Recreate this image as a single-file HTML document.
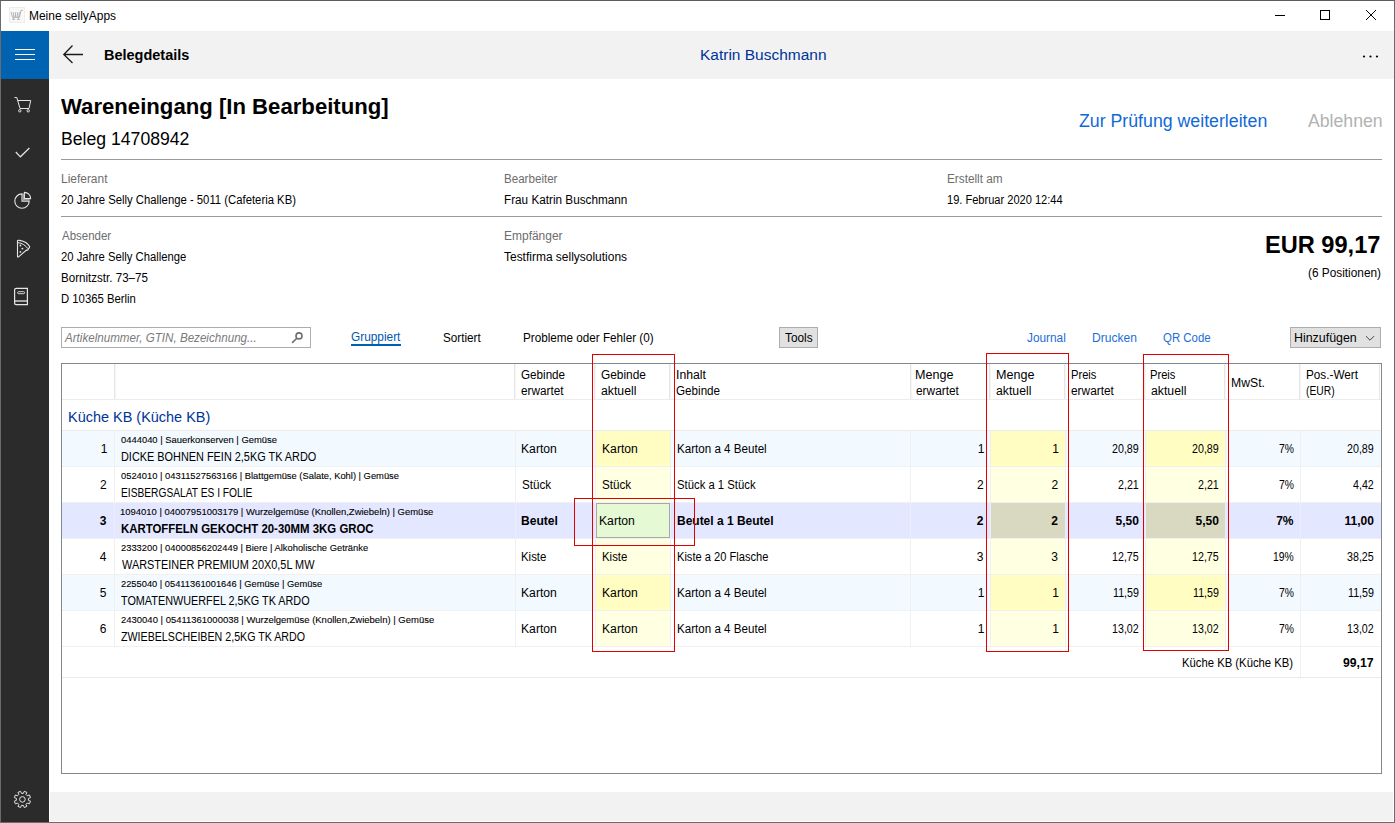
<!DOCTYPE html>
<html lang="de"><head><meta charset="utf-8"><title>Meine sellyApps</title>
<style>
html,body{margin:0;padding:0;}
body{width:1395px;height:823px;position:relative;overflow:hidden;background:#fff;font-family:'Liberation Sans',sans-serif;}
.t{position:absolute;white-space:pre;line-height:1;color:#000;transform-origin:0 0;}
.b{position:absolute;}
svg{position:absolute;overflow:visible;}
</style></head><body>
<!-- window frame -->
<div class="b" style="left:0;top:0;width:1395px;height:823px;background:#6b6b6b"></div><div class="b" style="left:0;top:0;width:1395px;height:1px;background:#5c5c5c"></div>
<div class="b" style="left:1px;top:1px;width:1393px;height:821px;background:#fff"></div>
<!-- nav bar -->
<div class="b" style="left:49px;top:31px;width:1345px;height:48px;background:#f2f2f2"></div>
<!-- sidebar -->
<div class="b" style="left:1px;top:31px;width:48px;height:791px;background:#2b2b2b"></div>
<div class="b" style="left:1px;top:31px;width:48px;height:48px;background:#0063b1"></div>
<!-- bottom bar -->
<div class="b" style="left:50px;top:792px;width:1343px;height:29px;background:#f2f2f2"></div>
<!-- title icon -->
<div class="b" style="left:9px;top:7px;width:16px;height:16px;background:#f8f8f8;box-shadow:inset 0 0 0 1px #ededed"></div>
<svg style="left:9px;top:7px" width="16" height="16" viewBox="0 0 16 16" fill="none" stroke="#a2a2a2" stroke-width="0.8"><path d="M2 5 L3.6 10.3 H10.3 L12 3.4 H13.8 M4.2 5.2 L5 10 M6.3 5.2 L6.6 10 M8.4 5.2 L8.2 10 M10.4 5.2 L9.8 10" /><path d="M3.4 12.3H5.8M8.2 12.3H10.6" stroke-width="1.1"/><path d="M4.6 10.5V12M9.4 10.5V12" stroke-width="0.7"/></svg>
<!-- window controls -->
<svg style="left:0;top:0" width="1395" height="80" viewBox="0 0 1395 80" fill="none" stroke="#000" stroke-width="1">
<path d="M1275 15.5H1285"/><rect x="1320.5" y="10.5" width="9" height="9"/><path d="M1366 10L1376 20M1376 10L1366 20"/>
<g fill="#000" stroke="none"><circle cx="1364" cy="56.5" r="1.1"/><circle cx="1370.5" cy="56.5" r="1.1"/><circle cx="1377" cy="56.5" r="1.1"/></g>
<!-- hamburger -->
<path d="M15 49.5H35M15 54.5H35M15 59.5H35" stroke="#fff"/>
<!-- back arrow -->
<path d="M83 54.5H64M72.5 45.5L63.8 54.5L72.5 63" stroke="#1a1a1a" stroke-width="1.3"/>
</svg>
<!-- sidebar icons -->
<svg style="left:0;top:80px" width="50" height="743" viewBox="0 80 50 743" fill="none" stroke="#e6e6e6" stroke-width="1">
<!-- cart -->
<path d="M14.5 97.5H16.8L20 108.5H29L30.7 100.5H17.8"/><circle cx="19.8" cy="110.8" r="1.2"/><circle cx="28.2" cy="110.8" r="1.2"/>
<!-- check -->
<path d="M15.8 152L20.4 156.8L29.4 148" stroke-width="1.2"/>
<!-- pie -->
<path d="M22 193.9A7.2 7.2 0 1 0 29.2 201.1H22Z" stroke-width="1.1"/><path d="M23.2 193.6V199.9H29.6" stroke="#a8a8a8" stroke-width="1.4"/><path d="M24.4 192.4V198.6H30.6A6.2 6.2 0 0 0 24.4 192.4Z" stroke-width="1.1"/>
<!-- pizza -->
<path d="M17.5 241.6C17.1 240.5 18 240.1 19.6 240.4C24.2 241.2 28 243.6 29.6 246.6C29.9 247.5 28.8 248 28.1 249.4C27.6 250.5 26.8 250.6 26.4 250L18.6 256.9C18 257.3 17.5 257 17.5 256.4Z" stroke-width="1.1"/><path d="M17.8 242.6C22.2 243.1 26 245.6 27.7 248.6" stroke-width="1"/><g fill="#e6e6e6" stroke="none"><circle cx="20.4" cy="245.5" r="0.9"/><circle cx="22.4" cy="248.6" r="0.95"/><circle cx="20.4" cy="251.9" r="0.9"/></g>
<!-- book -->
<path d="M27.4 288.4H16.2Q14.6 288.4 14.6 290V303Q14.6 304.6 16.2 304.6H27.4Z" stroke-width="1.2"/><path d="M14.8 301H27.4" stroke-width="1.3"/><rect x="17.6" y="291.7" width="7" height="2" rx="1" stroke-width="0.9"/>
<!-- gear -->
<circle cx="22.4" cy="799.4" r="2.8"/>
<path d="M30.50 801.21L29.41 803.85L27.34 802.99L25.99 804.34L26.85 806.41L24.21 807.50L23.35 805.42L21.45 805.42L20.59 807.50L17.95 806.41L18.81 804.34L17.46 802.99L15.39 803.85L14.30 801.21L16.38 800.35L16.38 798.45L14.30 797.59L15.39 794.95L17.46 795.81L18.81 794.46L17.95 792.39L20.59 791.30L21.45 793.38L23.35 793.38L24.21 791.30L26.85 792.39L25.99 794.46L27.34 795.81L29.41 794.95L30.50 797.59L28.42 798.45L28.42 800.35Z"/>
</svg>
<!-- rules -->
<div class="b" style="left:61px;top:159px;width:1321px;height:1px;background:#9a9a9a"></div>
<div class="b" style="left:61px;top:216px;width:1321px;height:1px;background:#9a9a9a"></div>
<!-- search box -->
<div class="b" style="left:61px;top:327px;width:250px;height:21px;box-sizing:border-box;border:1px solid #abadb3;background:#fff"></div>
<svg style="left:290px;top:331px" width="16" height="14" viewBox="290 331 16 14" fill="none" stroke="#6e6e6e" stroke-width="1.6"><circle cx="299" cy="335.9" r="3"/><path d="M296.8 338.2L292.1 342.9"/></svg>
<div class="b" style="left:351px;top:344px;width:50px;height:2px;background:#0063b1"></div>
<!-- buttons -->
<div class="b" style="left:779px;top:327px;width:39px;height:21px;box-sizing:border-box;border:1px solid #adadad;background:#e1e1e1"></div>
<div class="b" style="left:1290px;top:327px;width:91px;height:21px;box-sizing:border-box;border:1px solid #adadad;background:#e1e1e1"></div>
<svg style="left:1365px;top:335px" width="10" height="7" viewBox="0 0 10 7" fill="none" stroke="#444" stroke-width="1"><path d="M0.9 1.1L5 5.2L9.1 1.1"/></svg>
<div class="b" style="left:61px;top:363px;width:1321px;height:411px;background:#fff;box-sizing:border-box;border:1px solid #828790"></div>
<div class="b" style="left:62px;top:399px;width:1319px;height:1px;background:#ececec;"></div>
<div class="b" style="left:114px;top:364px;width:1px;height:35px;background:#e6e6e6;"></div>
<div class="b" style="left:115px;top:364px;width:1px;height:35px;background:#f5f5f5;"></div>
<div class="b" style="left:514px;top:364px;width:1px;height:35px;background:#e6e6e6;"></div>
<div class="b" style="left:515px;top:364px;width:1px;height:35px;background:#f5f5f5;"></div>
<div class="b" style="left:594px;top:364px;width:1px;height:35px;background:#e6e6e6;"></div>
<div class="b" style="left:595px;top:364px;width:1px;height:35px;background:#f5f5f5;"></div>
<div class="b" style="left:669px;top:364px;width:1px;height:35px;background:#e6e6e6;"></div>
<div class="b" style="left:670px;top:364px;width:1px;height:35px;background:#f5f5f5;"></div>
<div class="b" style="left:910px;top:364px;width:1px;height:35px;background:#e6e6e6;"></div>
<div class="b" style="left:911px;top:364px;width:1px;height:35px;background:#f5f5f5;"></div>
<div class="b" style="left:989px;top:364px;width:1px;height:35px;background:#e6e6e6;"></div>
<div class="b" style="left:990px;top:364px;width:1px;height:35px;background:#f5f5f5;"></div>
<div class="b" style="left:1064px;top:364px;width:1px;height:35px;background:#e6e6e6;"></div>
<div class="b" style="left:1065px;top:364px;width:1px;height:35px;background:#f5f5f5;"></div>
<div class="b" style="left:1144px;top:364px;width:1px;height:35px;background:#e6e6e6;"></div>
<div class="b" style="left:1145px;top:364px;width:1px;height:35px;background:#f5f5f5;"></div>
<div class="b" style="left:1224px;top:364px;width:1px;height:35px;background:#e6e6e6;"></div>
<div class="b" style="left:1225px;top:364px;width:1px;height:35px;background:#f5f5f5;"></div>
<div class="b" style="left:1299px;top:364px;width:1px;height:35px;background:#e6e6e6;"></div>
<div class="b" style="left:1300px;top:364px;width:1px;height:35px;background:#f5f5f5;"></div>
<div class="b" style="left:1379px;top:364px;width:1px;height:35px;background:#e6e6e6;"></div>
<div class="b" style="left:62px;top:430px;width:1319px;height:1px;background:#ebebeb;"></div>
<div class="b" style="left:62px;top:431px;width:1319px;height:35px;background:#f2f9ff;"></div>
<div class="b" style="left:62px;top:466px;width:1319px;height:1px;background:#f0f0f0;"></div>
<div class="b" style="left:114px;top:431px;width:1px;height:36px;background:#f0f0f0;"></div>
<div class="b" style="left:515px;top:431px;width:1px;height:36px;background:#f0f0f0;"></div>
<div class="b" style="left:595px;top:431px;width:1px;height:36px;background:#f0f0f0;"></div>
<div class="b" style="left:670px;top:431px;width:1px;height:36px;background:#f0f0f0;"></div>
<div class="b" style="left:910px;top:431px;width:1px;height:36px;background:#f0f0f0;"></div>
<div class="b" style="left:990px;top:431px;width:1px;height:36px;background:#f0f0f0;"></div>
<div class="b" style="left:1065px;top:431px;width:1px;height:36px;background:#f0f0f0;"></div>
<div class="b" style="left:1145px;top:431px;width:1px;height:36px;background:#f0f0f0;"></div>
<div class="b" style="left:1225px;top:431px;width:1px;height:36px;background:#f0f0f0;"></div>
<div class="b" style="left:1300px;top:431px;width:1px;height:36px;background:#f0f0f0;"></div>
<div class="b" style="left:596px;top:431px;width:74px;height:35px;background:#fffdc2;"></div>
<div class="b" style="left:991px;top:431px;width:74px;height:35px;background:#fffdc2;"></div>
<div class="b" style="left:1146px;top:431px;width:79px;height:35px;background:#fffdc2;"></div>
<div class="b" style="left:62px;top:467px;width:1319px;height:35px;background:#fff;"></div>
<div class="b" style="left:62px;top:502px;width:1319px;height:1px;background:#f0f0f0;"></div>
<div class="b" style="left:114px;top:467px;width:1px;height:36px;background:#f0f0f0;"></div>
<div class="b" style="left:515px;top:467px;width:1px;height:36px;background:#f0f0f0;"></div>
<div class="b" style="left:595px;top:467px;width:1px;height:36px;background:#f0f0f0;"></div>
<div class="b" style="left:670px;top:467px;width:1px;height:36px;background:#f0f0f0;"></div>
<div class="b" style="left:910px;top:467px;width:1px;height:36px;background:#f0f0f0;"></div>
<div class="b" style="left:990px;top:467px;width:1px;height:36px;background:#f0f0f0;"></div>
<div class="b" style="left:1065px;top:467px;width:1px;height:36px;background:#f0f0f0;"></div>
<div class="b" style="left:1145px;top:467px;width:1px;height:36px;background:#f0f0f0;"></div>
<div class="b" style="left:1225px;top:467px;width:1px;height:36px;background:#f0f0f0;"></div>
<div class="b" style="left:1300px;top:467px;width:1px;height:36px;background:#f0f0f0;"></div>
<div class="b" style="left:596px;top:467px;width:74px;height:35px;background:#ffffe2;"></div>
<div class="b" style="left:991px;top:467px;width:74px;height:35px;background:#ffffe2;"></div>
<div class="b" style="left:1146px;top:467px;width:79px;height:35px;background:#ffffe2;"></div>
<div class="b" style="left:62px;top:503px;width:1319px;height:35px;background:#e3e7ff;"></div>
<div class="b" style="left:62px;top:538px;width:1319px;height:1px;background:#f0f0f0;"></div>
<div class="b" style="left:114px;top:503px;width:1px;height:36px;background:#eceefa;"></div>
<div class="b" style="left:515px;top:503px;width:1px;height:36px;background:#eceefa;"></div>
<div class="b" style="left:595px;top:503px;width:1px;height:36px;background:#eceefa;"></div>
<div class="b" style="left:670px;top:503px;width:1px;height:36px;background:#eceefa;"></div>
<div class="b" style="left:910px;top:503px;width:1px;height:36px;background:#eceefa;"></div>
<div class="b" style="left:990px;top:503px;width:1px;height:36px;background:#eceefa;"></div>
<div class="b" style="left:1065px;top:503px;width:1px;height:36px;background:#eceefa;"></div>
<div class="b" style="left:1145px;top:503px;width:1px;height:36px;background:#eceefa;"></div>
<div class="b" style="left:1225px;top:503px;width:1px;height:36px;background:#eceefa;"></div>
<div class="b" style="left:1300px;top:503px;width:1px;height:36px;background:#eceefa;"></div>
<div class="b" style="left:596px;top:503px;width:74px;height:35px;background:#ffffe2;"></div>
<div class="b" style="left:991px;top:503px;width:74px;height:35px;background:#d9d9c1;"></div>
<div class="b" style="left:1146px;top:503px;width:79px;height:35px;background:#d9d9c1;"></div>
<div class="b" style="left:62px;top:539px;width:1319px;height:35px;background:#fff;"></div>
<div class="b" style="left:62px;top:574px;width:1319px;height:1px;background:#f0f0f0;"></div>
<div class="b" style="left:114px;top:539px;width:1px;height:36px;background:#f0f0f0;"></div>
<div class="b" style="left:515px;top:539px;width:1px;height:36px;background:#f0f0f0;"></div>
<div class="b" style="left:595px;top:539px;width:1px;height:36px;background:#f0f0f0;"></div>
<div class="b" style="left:670px;top:539px;width:1px;height:36px;background:#f0f0f0;"></div>
<div class="b" style="left:910px;top:539px;width:1px;height:36px;background:#f0f0f0;"></div>
<div class="b" style="left:990px;top:539px;width:1px;height:36px;background:#f0f0f0;"></div>
<div class="b" style="left:1065px;top:539px;width:1px;height:36px;background:#f0f0f0;"></div>
<div class="b" style="left:1145px;top:539px;width:1px;height:36px;background:#f0f0f0;"></div>
<div class="b" style="left:1225px;top:539px;width:1px;height:36px;background:#f0f0f0;"></div>
<div class="b" style="left:1300px;top:539px;width:1px;height:36px;background:#f0f0f0;"></div>
<div class="b" style="left:596px;top:539px;width:74px;height:35px;background:#ffffe2;"></div>
<div class="b" style="left:991px;top:539px;width:74px;height:35px;background:#ffffe2;"></div>
<div class="b" style="left:1146px;top:539px;width:79px;height:35px;background:#ffffe2;"></div>
<div class="b" style="left:62px;top:575px;width:1319px;height:35px;background:#f2f9ff;"></div>
<div class="b" style="left:62px;top:610px;width:1319px;height:1px;background:#f0f0f0;"></div>
<div class="b" style="left:114px;top:575px;width:1px;height:36px;background:#f0f0f0;"></div>
<div class="b" style="left:515px;top:575px;width:1px;height:36px;background:#f0f0f0;"></div>
<div class="b" style="left:595px;top:575px;width:1px;height:36px;background:#f0f0f0;"></div>
<div class="b" style="left:670px;top:575px;width:1px;height:36px;background:#f0f0f0;"></div>
<div class="b" style="left:910px;top:575px;width:1px;height:36px;background:#f0f0f0;"></div>
<div class="b" style="left:990px;top:575px;width:1px;height:36px;background:#f0f0f0;"></div>
<div class="b" style="left:1065px;top:575px;width:1px;height:36px;background:#f0f0f0;"></div>
<div class="b" style="left:1145px;top:575px;width:1px;height:36px;background:#f0f0f0;"></div>
<div class="b" style="left:1225px;top:575px;width:1px;height:36px;background:#f0f0f0;"></div>
<div class="b" style="left:1300px;top:575px;width:1px;height:36px;background:#f0f0f0;"></div>
<div class="b" style="left:596px;top:575px;width:74px;height:35px;background:#fffdc2;"></div>
<div class="b" style="left:991px;top:575px;width:74px;height:35px;background:#fffdc2;"></div>
<div class="b" style="left:1146px;top:575px;width:79px;height:35px;background:#fffdc2;"></div>
<div class="b" style="left:62px;top:611px;width:1319px;height:35px;background:#fff;"></div>
<div class="b" style="left:62px;top:646px;width:1319px;height:1px;background:#f0f0f0;"></div>
<div class="b" style="left:114px;top:611px;width:1px;height:36px;background:#f0f0f0;"></div>
<div class="b" style="left:515px;top:611px;width:1px;height:36px;background:#f0f0f0;"></div>
<div class="b" style="left:595px;top:611px;width:1px;height:36px;background:#f0f0f0;"></div>
<div class="b" style="left:670px;top:611px;width:1px;height:36px;background:#f0f0f0;"></div>
<div class="b" style="left:910px;top:611px;width:1px;height:36px;background:#f0f0f0;"></div>
<div class="b" style="left:990px;top:611px;width:1px;height:36px;background:#f0f0f0;"></div>
<div class="b" style="left:1065px;top:611px;width:1px;height:36px;background:#f0f0f0;"></div>
<div class="b" style="left:1145px;top:611px;width:1px;height:36px;background:#f0f0f0;"></div>
<div class="b" style="left:1225px;top:611px;width:1px;height:36px;background:#f0f0f0;"></div>
<div class="b" style="left:1300px;top:611px;width:1px;height:36px;background:#f0f0f0;"></div>
<div class="b" style="left:596px;top:611px;width:74px;height:35px;background:#ffffe2;"></div>
<div class="b" style="left:991px;top:611px;width:74px;height:35px;background:#ffffe2;"></div>
<div class="b" style="left:1146px;top:611px;width:79px;height:35px;background:#ffffe2;"></div>
<div class="b" style="left:596px;top:503px;width:74px;height:35px;background:#e5f9d5;box-sizing:border-box;border:1px solid #a8a8a8"></div>
<div class="b" style="left:62px;top:677px;width:1319px;height:1px;background:#e9e9e9;"></div>
<div class="b" style="left:1300px;top:647px;width:1px;height:30px;background:#f0f0f0;"></div>
<span class="t" style="left:29.40px;top:10px;font-size:12px;transform:scaleX(0.9965);">Meine sellyApps</span>
<span class="t" style="left:104.07px;top:47px;font-size:15.5px;transform:scaleX(0.9348);font-weight:700;">Belegdetails</span>
<span class="t" style="left:699.75px;top:47px;font-size:15.5px;transform:scaleX(0.9992);color:#003399;">Katrin Buschmann</span>
<span class="t" style="left:61.40px;top:97px;font-size:21.5px;transform:scaleX(1.0300);font-weight:700;">Wareneingang [In Bearbeitung]</span>
<span class="t" style="left:60.83px;top:130px;font-size:18px;transform:scaleX(0.9794);">Beleg 14708942</span>
<span class="t" style="left:1079.21px;top:112px;font-size:18px;transform:scaleX(0.9852);color:#0f69d9;">Zur Prüfung weiterleiten</span>
<span class="t" style="left:1307.60px;top:112px;font-size:18px;transform:scaleX(0.9813);color:#b2b2b2;">Ablehnen</span>
<span class="t" style="left:60.61px;top:173px;font-size:12px;transform:scaleX(0.9945);color:#6d6d6d;">Lieferant</span>
<span class="t" style="left:61.03px;top:194px;font-size:12px;transform:scaleX(0.9427);">20 Jahre Selly Challenge - 5011 (Cafeteria KB)</span>
<span class="t" style="left:503.53px;top:173px;font-size:12px;transform:scaleX(0.9659);color:#6d6d6d;">Bearbeiter</span>
<span class="t" style="left:503.52px;top:194px;font-size:12px;transform:scaleX(0.9787);">Frau Katrin Buschmann</span>
<span class="t" style="left:947.32px;top:173px;font-size:12px;transform:scaleX(0.9818);color:#6d6d6d;">Erstellt am</span>
<span class="t" style="left:947.38px;top:194px;font-size:12px;transform:scaleX(0.9218);">19. Februar 2020 12:44</span>
<span class="t" style="left:61.50px;top:230px;font-size:12px;transform:scaleX(0.9561);color:#6d6d6d;">Absender</span>
<span class="t" style="left:61.03px;top:251px;font-size:12px;transform:scaleX(0.9389);">20 Jahre Selly Challenge</span>
<span class="t" style="left:60.54px;top:272px;font-size:12px;transform:scaleX(0.9650);">Bornitzstr. 73–75</span>
<span class="t" style="left:60.56px;top:293px;font-size:12px;transform:scaleX(0.9432);">D 10365 Berlin</span>
<span class="t" style="left:503.50px;top:230px;font-size:12px;transform:scaleX(0.9983);color:#6d6d6d;">Empfänger</span>
<span class="t" style="left:504.25px;top:251px;font-size:12px;transform:scaleX(0.9971);">Testfirma sellysolutions</span>
<span class="t" style="left:1265.49px;top:234px;font-size:23.5px;transform:scaleX(1.0036);font-weight:700;">EUR 99,17</span>
<span class="t" style="left:1308.16px;top:267px;font-size:12px;transform:scaleX(0.9862);">(6 Positionen)</span>
<span class="t" style="left:64.68px;top:332px;font-size:12px;transform:scaleX(0.9680);color:#7a7a7a;font-style:italic;">Artikelnummer, GTIN, Bezeichnung...</span>
<span class="t" style="left:351.21px;top:331px;font-size:12px;transform:scaleX(0.9879);color:#0058ad;">Gruppiert</span>
<span class="t" style="left:442.91px;top:332px;font-size:12px;transform:scaleX(0.9752);">Sortiert</span>
<span class="t" style="left:522.63px;top:332px;font-size:12px;transform:scaleX(0.9747);">Probleme oder Fehler (0)</span>
<span class="t" style="left:784.65px;top:332px;font-size:12px;transform:scaleX(0.9835);">Tools</span>
<span class="t" style="left:1026.95px;top:332px;font-size:12px;transform:scaleX(0.9856);color:#1c6dd8;">Journal</span>
<span class="t" style="left:1091.59px;top:332px;font-size:12px;transform:scaleX(1.0070);color:#1c6dd8;">Drucken</span>
<span class="t" style="left:1162.72px;top:332px;font-size:12px;transform:scaleX(0.9531);color:#1c6dd8;">QR Code</span>
<span class="t" style="left:1294.47px;top:332px;font-size:12px;transform:scaleX(1.0339);">Hinzufügen</span>
<span class="t" style="left:521.31px;top:369px;font-size:12px;transform:scaleX(0.9718);">Gebinde</span>
<span class="t" style="left:521.31px;top:385px;font-size:12px;transform:scaleX(0.9825);">erwartet</span>
<span class="t" style="left:600.91px;top:369px;font-size:12px;transform:scaleX(0.9898);">Gebinde</span>
<span class="t" style="left:600.89px;top:385px;font-size:12px;transform:scaleX(1.0209);">aktuell</span>
<span class="t" style="left:676.08px;top:369px;font-size:12px;transform:scaleX(1.0195);">Inhalt</span>
<span class="t" style="left:676.01px;top:385px;font-size:12px;transform:scaleX(0.9718);">Gebinde</span>
<span class="t" style="left:915.45px;top:369px;font-size:12px;transform:scaleX(1.0468);">Menge</span>
<span class="t" style="left:916.01px;top:385px;font-size:12px;transform:scaleX(0.9895);">erwartet</span>
<span class="t" style="left:995.75px;top:369px;font-size:12px;transform:scaleX(1.0468);">Menge</span>
<span class="t" style="left:996.29px;top:385px;font-size:12px;transform:scaleX(1.0209);">aktuell</span>
<span class="t" style="left:1070.57px;top:369px;font-size:12px;transform:scaleX(0.9300);">Preis</span>
<span class="t" style="left:1071.01px;top:385px;font-size:12px;transform:scaleX(0.9895);">erwartet</span>
<span class="t" style="left:1150.27px;top:369px;font-size:12px;transform:scaleX(0.9300);">Preis</span>
<span class="t" style="left:1150.69px;top:385px;font-size:12px;transform:scaleX(1.0209);">aktuell</span>
<span class="t" style="left:1230.68px;top:377px;font-size:12px;transform:scaleX(1.0176);">MwSt.</span>
<span class="t" style="left:1306.02px;top:369px;font-size:12px;transform:scaleX(0.9788);">Pos.-Wert</span>
<span class="t" style="left:1306.36px;top:385px;font-size:12px;transform:scaleX(0.8567);">(EUR)</span>
<span class="t" style="left:68.13px;top:409px;font-size:15.5px;transform:scaleX(0.9331);color:#003399;">Küche KB (Küche KB)</span>
<span class="t" style="left:100.65px;top:443px;font-size:12px;transform:scaleX(1.0000);">1</span>
<span class="t" style="left:120.86px;top:435px;font-size:9.6px;transform:scaleX(0.9798);-webkit-text-stroke:0.1px #000;">0444040 | Sauerkonserven | Gemüse</span>
<span class="t" style="left:120.79px;top:451px;font-size:12px;transform:scaleX(0.9077);">DICKE BOHNEN FEIN 2,5KG TK ARDO</span>
<span class="t" style="left:521.19px;top:443px;font-size:12px;transform:scaleX(1.0149);">Karton</span>
<span class="t" style="left:601.79px;top:443px;font-size:12px;transform:scaleX(1.0149);">Karton</span>
<span class="t" style="left:676.73px;top:443px;font-size:12px;transform:scaleX(0.9670);">Karton a 4 Beutel</span>
<span class="t" style="left:977.85px;top:443px;font-size:12px;transform:scaleX(1.0000);">1</span>
<span class="t" style="left:1052.15px;top:443px;font-size:12px;transform:scaleX(1.0000);">1</span>
<span class="t" style="left:1112.25px;top:443px;font-size:12px;transform:scaleX(0.8900);">20,89</span>
<span class="t" style="left:1192.25px;top:443px;font-size:12px;transform:scaleX(0.8900);">20,89</span>
<span class="t" style="left:1278.58px;top:443px;font-size:12px;transform:scaleX(0.8600);">7%</span>
<span class="t" style="left:1347.25px;top:443px;font-size:12px;transform:scaleX(0.8900);">20,89</span>
<span class="t" style="left:99.90px;top:479px;font-size:12px;transform:scaleX(1.0000);">2</span>
<span class="t" style="left:120.86px;top:471px;font-size:9.6px;transform:scaleX(0.9747);-webkit-text-stroke:0.1px #000;">0524010 | 04311527563166 | Blattgemüse (Salate, Kohl) | Gemüse</span>
<span class="t" style="left:120.85px;top:487px;font-size:12px;transform:scaleX(0.8517);">EISBERGSALAT ES I FOLIE</span>
<span class="t" style="left:521.71px;top:479px;font-size:12px;transform:scaleX(0.9729);">Stück</span>
<span class="t" style="left:602.31px;top:479px;font-size:12px;transform:scaleX(0.9729);">Stück</span>
<span class="t" style="left:677.23px;top:479px;font-size:12px;transform:scaleX(0.9426);">Stück a 1 Stück</span>
<span class="t" style="left:977.10px;top:479px;font-size:12px;transform:scaleX(1.0000);">2</span>
<span class="t" style="left:1051.40px;top:479px;font-size:12px;transform:scaleX(1.0000);">2</span>
<span class="t" style="left:1118.25px;top:479px;font-size:12px;transform:scaleX(0.8900);">2,21</span>
<span class="t" style="left:1198.25px;top:479px;font-size:12px;transform:scaleX(0.8900);">2,21</span>
<span class="t" style="left:1278.58px;top:479px;font-size:12px;transform:scaleX(0.8600);">7%</span>
<span class="t" style="left:1353.25px;top:479px;font-size:12px;transform:scaleX(0.8900);">4,42</span>
<span class="t" style="left:99.65px;top:515px;font-size:12px;transform:scaleX(1.0000);font-weight:700;">3</span>
<span class="t" style="left:120.36px;top:507px;font-size:9.6px;transform:scaleX(0.9864);-webkit-text-stroke:0.1px #000;">1094010 | 04007951003179 | Wurzelgemüse (Knollen,Zwiebeln) | Gemüse</span>
<span class="t" style="left:120.99px;top:523px;font-size:12px;transform:scaleX(0.9503);font-weight:700;">KARTOFFELN GEKOCHT 20-30MM 3KG GROC</span>
<span class="t" style="left:521.45px;top:515px;font-size:12px;transform:scaleX(1.0057);font-weight:700;">Beutel</span>
<span class="t" style="left:598.79px;top:515px;font-size:12px;transform:scaleX(1.0149);">Karton</span>
<span class="t" style="left:676.95px;top:515px;font-size:12px;transform:scaleX(0.9984);font-weight:700;">Beutel a 1 Beutel</span>
<span class="t" style="left:976.85px;top:515px;font-size:12px;transform:scaleX(1.0000);font-weight:700;">2</span>
<span class="t" style="left:1051.15px;top:515px;font-size:12px;transform:scaleX(1.0000);font-weight:700;">2</span>
<span class="t" style="left:1115.50px;top:515px;font-size:12px;transform:scaleX(1.0000);font-weight:700;">5,50</span>
<span class="t" style="left:1195.50px;top:515px;font-size:12px;transform:scaleX(1.0000);font-weight:700;">5,50</span>
<span class="t" style="left:1276.20px;top:515px;font-size:12px;transform:scaleX(1.0000);font-weight:700;">7%</span>
<span class="t" style="left:1344.50px;top:515px;font-size:12px;transform:scaleX(1.0000);font-weight:700;">11,00</span>
<span class="t" style="left:99.65px;top:551px;font-size:12px;transform:scaleX(1.0000);">4</span>
<span class="t" style="left:120.61px;top:543px;font-size:9.6px;transform:scaleX(0.9754);-webkit-text-stroke:0.1px #000;">2333200 | 04000856202449 | Biere | Alkoholische Getränke</span>
<span class="t" style="left:121.70px;top:559px;font-size:12px;transform:scaleX(0.9086);">WARSTEINER PREMIUM 20X0,5L MW</span>
<span class="t" style="left:521.25px;top:551px;font-size:12px;transform:scaleX(0.9505);">Kiste</span>
<span class="t" style="left:601.85px;top:551px;font-size:12px;transform:scaleX(0.9505);">Kiste</span>
<span class="t" style="left:676.77px;top:551px;font-size:12px;transform:scaleX(0.9254);">Kiste a 20 Flasche</span>
<span class="t" style="left:976.85px;top:551px;font-size:12px;transform:scaleX(1.0000);">3</span>
<span class="t" style="left:1051.15px;top:551px;font-size:12px;transform:scaleX(1.0000);">3</span>
<span class="t" style="left:1112.24px;top:551px;font-size:12px;transform:scaleX(0.8900);">12,75</span>
<span class="t" style="left:1192.24px;top:551px;font-size:12px;transform:scaleX(0.8900);">12,75</span>
<span class="t" style="left:1272.78px;top:551px;font-size:12px;transform:scaleX(0.8600);">19%</span>
<span class="t" style="left:1347.25px;top:551px;font-size:12px;transform:scaleX(0.8900);">38,25</span>
<span class="t" style="left:99.65px;top:587px;font-size:12px;transform:scaleX(1.0000);">5</span>
<span class="t" style="left:120.61px;top:579px;font-size:9.6px;transform:scaleX(0.9705);-webkit-text-stroke:0.1px #000;">2255040 | 05411361001646 | Gemüse | Gemüse</span>
<span class="t" style="left:121.47px;top:595px;font-size:12px;transform:scaleX(0.9028);">TOMATENWUERFEL 2,5KG TK ARDO</span>
<span class="t" style="left:521.19px;top:587px;font-size:12px;transform:scaleX(1.0149);">Karton</span>
<span class="t" style="left:601.79px;top:587px;font-size:12px;transform:scaleX(1.0149);">Karton</span>
<span class="t" style="left:676.73px;top:587px;font-size:12px;transform:scaleX(0.9670);">Karton a 4 Beutel</span>
<span class="t" style="left:977.85px;top:587px;font-size:12px;transform:scaleX(1.0000);">1</span>
<span class="t" style="left:1052.15px;top:587px;font-size:12px;transform:scaleX(1.0000);">1</span>
<span class="t" style="left:1113.13px;top:587px;font-size:12px;transform:scaleX(0.8900);">11,59</span>
<span class="t" style="left:1193.13px;top:587px;font-size:12px;transform:scaleX(0.8900);">11,59</span>
<span class="t" style="left:1278.58px;top:587px;font-size:12px;transform:scaleX(0.8600);">7%</span>
<span class="t" style="left:1348.13px;top:587px;font-size:12px;transform:scaleX(0.8900);">11,59</span>
<span class="t" style="left:99.65px;top:623px;font-size:12px;transform:scaleX(1.0000);">6</span>
<span class="t" style="left:120.61px;top:615px;font-size:9.6px;transform:scaleX(0.9880);-webkit-text-stroke:0.1px #000;">2430040 | 05411361000038 | Wurzelgemüse (Knollen,Zwiebeln) | Gemüse</span>
<span class="t" style="left:121.26px;top:631px;font-size:12px;transform:scaleX(0.8883);">ZWIEBELSCHEIBEN 2,5KG TK ARDO</span>
<span class="t" style="left:521.19px;top:623px;font-size:12px;transform:scaleX(1.0149);">Karton</span>
<span class="t" style="left:601.79px;top:623px;font-size:12px;transform:scaleX(1.0149);">Karton</span>
<span class="t" style="left:676.73px;top:623px;font-size:12px;transform:scaleX(0.9670);">Karton a 4 Beutel</span>
<span class="t" style="left:977.85px;top:623px;font-size:12px;transform:scaleX(1.0000);">1</span>
<span class="t" style="left:1052.15px;top:623px;font-size:12px;transform:scaleX(1.0000);">1</span>
<span class="t" style="left:1112.24px;top:623px;font-size:12px;transform:scaleX(0.8900);">13,02</span>
<span class="t" style="left:1192.24px;top:623px;font-size:12px;transform:scaleX(0.8900);">13,02</span>
<span class="t" style="left:1278.58px;top:623px;font-size:12px;transform:scaleX(0.8600);">7%</span>
<span class="t" style="left:1347.24px;top:623px;font-size:12px;transform:scaleX(0.8900);">13,02</span>
<span class="t" style="left:1182.16px;top:657px;font-size:12px;transform:scaleX(0.9411);">Küche KB (Küche KB)</span>
<span class="t" style="left:1342.99px;top:657px;font-size:12px;transform:scaleX(1.0172);font-weight:700;">99,17</span>
<div class="b" style="left:592px;top:354px;width:83px;height:298px;box-sizing:border-box;border:1px solid #e00000"></div>
<div class="b" style="left:986px;top:353px;width:83px;height:299px;box-sizing:border-box;border:1px solid #e00000"></div>
<div class="b" style="left:1143px;top:354px;width:86px;height:297px;box-sizing:border-box;border:1px solid #e00000"></div>
<div class="b" style="left:574px;top:498px;width:121px;height:48px;box-sizing:border-box;border:1px solid #e00000"></div>
</body></html>
